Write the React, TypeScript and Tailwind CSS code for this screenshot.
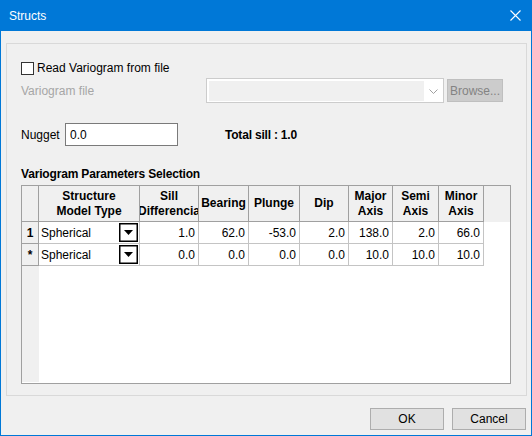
import React from "react";

const cols = [
  { l1: "Structure", l2: "Model Type", w: "w-[101px]", align: "left" },
  { l1: "Sill", l2: "Differencia", w: "w-[59px]", align: "right" },
  { l1: "Bearing", l2: "", w: "w-[50px]", align: "right" },
  { l1: "Plunge", l2: "", w: "w-[51px]", align: "right" },
  { l1: "Dip", l2: "", w: "w-[49px]", align: "right" },
  { l1: "Major", l2: "Axis", w: "w-[44px]", align: "right" },
  { l1: "Semi", l2: "Axis", w: "w-[46px]", align: "right" },
  { l1: "Minor", l2: "Axis", w: "w-[45px]", align: "right" },
];

const rows = [
  ["1", "Spherical", "1.0", "62.0", "-53.0", "2.0", "138.0", "2.0", "66.0"],
  ["*", "Spherical", "0.0", "0.0", "0.0", "0.0", "10.0", "10.0", "10.0"],
];

function DropBtn() {
  return (
    <div className="w-[19px] h-[19px] border border-black bg-white flex items-center justify-center shrink-0 shadow-[inset_0_0_0_0.5px_#000]">
      <svg width="9" height="5" viewBox="0 0 9 5">
        <path d="M0 0 H9 L4.5 5 Z" fill="#000" />
      </svg>
    </div>
  );
}

export default function App() {
  return (
    <div className="w-[532px] h-[436px] bg-[#f0f0f0] border-x border-b border-[#0078d7] flex flex-col font-['Liberation_Sans',Arial,sans-serif] text-[12px] text-black overflow-hidden">
      {/* Title bar */}
      <div className="h-[31px] shrink-0 bg-[#0078d7] flex items-center pl-[8px] pr-[10px] text-white">
        <span className="text-[12px]">Structs</span>
        <div className="ml-auto">
          <svg width="11" height="11" viewBox="0 0 11 11">
            <path d="M0.5 0.5 L10.5 10.5 M10.5 0.5 L0.5 10.5" stroke="#fff" strokeWidth="1.1" />
          </svg>
        </div>
      </div>

      {/* Panel */}
      <div className="mt-[12px] ml-[5px] w-[521px] h-[353px] border border-[#d9d9d9] flex flex-col pl-[14px]">
        {/* Checkbox row */}
        <div className="mt-[18px] h-[13px] flex items-center gap-[3px]">
          <div className="w-[13px] h-[13px] border border-[#333] bg-white shrink-0" />
          <span className="leading-[13px]">Read Variogram from file</span>
        </div>

        {/* Variogram file row */}
        <div className="mt-[3px] h-[25px] flex items-start">
          <span className="text-[#a6a6a6] mt-[4px] w-[185px]">Variogram file</span>
          <div className="w-[238px] h-[25px] border border-[#cccccc] bg-white flex items-center pl-[2px] pt-[2px] pb-[1px]">
            <div className="w-[215px] h-full bg-[#f0f0f0]" />
            <div className="flex-1 flex items-center justify-center">
              <svg width="9" height="5" viewBox="0 0 9 5">
                <path d="M0.5 0.5 L4.5 4.5 L8.5 0.5" stroke="#a0a0a0" fill="none" strokeWidth="1" />
              </svg>
            </div>
          </div>
          <div className="ml-[3px] mt-[1px] w-[56px] h-[23px] bg-[#cccccc] border border-[#bfbfbf] text-[#838383] flex items-center justify-center">
            Browse...
          </div>
        </div>

        {/* Nugget row */}
        <div className="mt-[20px] h-[23px] flex items-center">
          <span className="w-[44px]">Nugget</span>
          <div className="w-[113px] h-[23px] border border-[#7a7a7a] bg-white flex items-center pl-[4px]">
            0.0
          </div>
          <span className="ml-[47px] font-bold tracking-[-0.2px]">Total sill : 1.0</span>
        </div>

        {/* Section label */}
        <div className="mt-[20px] h-[16px] leading-[16px] font-bold tracking-[-0.17px]">Variogram Parameters Selection</div>

        {/* Table */}
        <div className="mt-[3px] w-[490px] h-[199px] border border-[#a0a0a0] bg-white flex flex-col overflow-hidden">
          {/* Header */}
          <div className="h-[36px] shrink-0 flex bg-[#f0f0f0]">
            <div className="w-[17px] shrink-0 border-r border-b border-[#a0a0a0]" />
            {cols.map((c, i) => (
              <div
                key={i}
                className={`${c.w} shrink-0 border-r border-b border-[#a0a0a0] flex flex-col items-center justify-center font-bold leading-[15px] overflow-hidden whitespace-nowrap`}
              >
                <span>{c.l1}</span>
                {c.l2 && <span>{c.l2}</span>}
              </div>
            ))}
            <div className="flex-1" />
          </div>
          {/* Rows */}
          {rows.map((r, ri) => (
            <div key={ri} className="h-[22px] shrink-0 flex">
              <div className="w-[17px] shrink-0 bg-[#f0f0f0] border-r border-b border-[#a0a0a0] flex items-center justify-center font-bold">
                {r[0]}
              </div>
              {cols.map((c, ci) => (
                <div
                  key={ci}
                  className={`${c.w} shrink-0 border-r border-b border-[#c4c4c4] flex items-center overflow-hidden whitespace-nowrap ${
                    c.align === "left" ? "pl-[2px] pr-[1px]" : "justify-end pr-[3px]"
                  }`}
                >
                  <span className={c.align === "left" ? "flex-1" : ""}>{r[ci + 1]}</span>
                  {ci === 0 && <DropBtn />}
                </div>
              ))}
              <div className="flex-1" />
            </div>
          ))}
          <div className="flex-1 flex">
            <div className="w-[17px] shrink-0 bg-[#f0f0f0] mb-[1px]" />
          </div>
        </div>
      </div>

      {/* Buttons */}
      <div className="mt-[12px] h-[22px] flex justify-end gap-[8px] pr-[5px]">
        <div className="w-[74px] h-[22px] bg-[#e1e1e1] border border-[#adadad] flex items-center justify-center">OK</div>
        <div className="w-[74px] h-[22px] bg-[#e1e1e1] border border-[#adadad] flex items-center justify-center">Cancel</div>
      </div>
    </div>
  );
}
